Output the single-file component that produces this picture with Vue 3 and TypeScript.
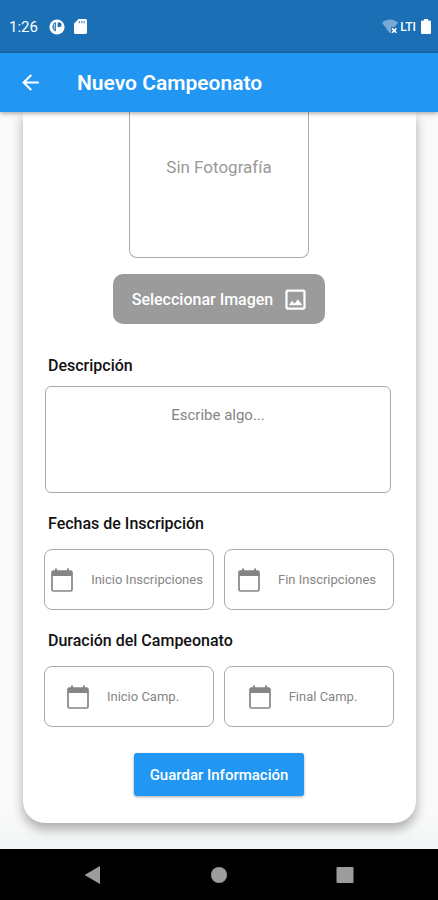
<script setup lang="ts">
import { ref } from 'vue'

interface DateField {
  id: string
  label: string
}

interface DateGroup {
  title: string
  compact: boolean
  fields: DateField[]
}

const description = ref('')

const groups: DateGroup[] = [
  {
    title: 'Fechas de Inscripción',
    compact: false,
    fields: [
      { id: 'signup-start', label: 'Inicio Inscripciones' },
      { id: 'signup-end', label: 'Fin Inscripciones' },
    ],
  },
  {
    title: 'Duración del Campeonato',
    compact: true,
    fields: [
      { id: 'cup-start', label: 'Inicio Camp.' },
      { id: 'cup-end', label: 'Final Camp.' },
    ],
  },
]
</script>

<template>
  <div class="screen">
    <div class="status">
      <span class="clock">1:26</span>
      <svg class="status-app" viewBox="0 0 16 16" aria-hidden="true">
        <circle cx="8" cy="8" r="7.6" fill="#fff" />
        <path d="M6.9 3.2V12.4C4.9 12 3.4 10.2 3.4 7.800S4.9 3.600 6.900 3.200Z" fill="#1b6fb5" />
        <path d="M5.300 5v5.400" stroke="#fff" stroke-width=".8" />
        <path d="M8.600 3.600H10.400A2 2 0 0 1 10.400 8H8.600Z" fill="#1b6fb5" />
      </svg>
      <svg class="status-card" viewBox="0 0 13 15" aria-hidden="true">
        <path d="M4.6 0H11.4Q13 0 13 1.6V13.4Q13 15 11.4 15H1.6Q0 15 0 13.4V4.6Z" fill="#fff" />
        <path d="M5.4 2v2.2M7.8 2v2.2M10.2 2v2.2" stroke="#5c9ad0" stroke-width="1.3" />
      </svg>
      <span class="spacer"></span>
      <svg class="wifi" viewBox="0 0 16 15" aria-hidden="true">
        <path d="M0 3.8C4.6-.6 11.4-.6 16 3.8L12.8 8H9v5.6L8 14.4Z" fill="#76a9d3" />
        <path d="M10 9.4l4.4 4.4M14.4 9.4L10 13.8" stroke="#fff" stroke-width="1.6" />
      </svg>
      <span class="network">LTI</span>
      <svg class="battery" viewBox="0 0 10 15" aria-hidden="true">
        <path d="M3 0H7V1.6H8.8Q10 1.6 10 2.8V13.8Q10 15 8.8 15H1.2Q0 15 0 13.8V2.8Q0 1.6 1.2 1.6H3Z" fill="#fff" />
      </svg>
    </div>

    <header class="appbar">
      <button class="back" type="button" aria-label="Volver">
        <svg viewBox="0 0 24 24" aria-hidden="true">
          <path d="M20 11H7.83l5.59-5.59L12 4l-8 8 8 8 1.41-1.41L7.83 13H20v-2z" fill="#fff" />
        </svg>
      </button>
      <h1>Nuevo Campeonato</h1>
    </header>

    <main class="content">
      <form class="card" @submit.prevent>
        <div class="photo">Sin Fotografía</div>
        <button class="pick" type="button">
          <span>Seleccionar Imagen</span>
          <svg viewBox="0 0 24 24" aria-hidden="true">
            <path
              d="M19 5v14H5V5h14m0-2H5c-1.1 0-2 .9-2 2v14c0 1.1.9 2 2 2h14c1.1 0 2-.9 2-2V5c0-1.1-.9-2-2-2zm-4.860 8.860l-3 3.870L9 13.140 6 17h12l-3.860-5.140z"
              fill="#fff"
            />
          </svg>
        </button>

        <label class="heading" for="description">Descripción</label>
        <textarea id="description" v-model="description" placeholder="Escribe algo..."></textarea>

        <section v-for="group in groups" :key="group.title" class="group">
          <h2 class="heading">{{ group.title }}</h2>
          <div class="dates">
            <button
              v-for="field in group.fields"
              :key="field.id"
              type="button"
              class="date"
              :class="{ compact: group.compact }"
            >
              <svg viewBox="0 0 22 24" aria-hidden="true">
                <rect x="1" y="3" width="20" height="20" rx="1.500" fill="none" stroke="#858585" stroke-width="1.700" />
                <path d="M1 3h20v5H1zM4 .5h2V4H4zM16 .5h2V4h-2z" fill="#858585" />
              </svg>
              <span>{{ field.label }}</span>
            </button>
          </div>
        </section>

        <button class="save" type="submit">Guardar Información</button>
      </form>
    </main>

    <nav class="system">
      <button type="button" aria-label="Atrás">
        <svg viewBox="0 0 20 20" aria-hidden="true"><path d="M1.500 10L17 1V19Z" fill="#9c9c9c" /></svg>
      </button>
      <button type="button" aria-label="Inicio">
        <svg viewBox="0 0 20 20" aria-hidden="true"><circle cx="10" cy="10" r="8" fill="#9c9c9c" /></svg>
      </button>
      <button type="button" aria-label="Recientes">
        <svg viewBox="0 0 20 20" aria-hidden="true"><rect x="1.500" y="2" width="17" height="16" rx="1" fill="#9c9c9c" /></svg>
      </button>
    </nav>
  </div>
</template>

<style>
body {
  margin: 0;
}
</style>

<style scoped>
.screen {
  display: flex;
  flex-direction: column;
  min-height: 100vh;
  background: #fafafa;
  font-family: Roboto, 'Liberation Sans', sans-serif;
  color: #111;
}

button {
  margin: 0;
  padding: 0;
  border: 0;
  background: none;
  font: inherit;
  color: inherit;
  cursor: pointer;
}

svg {
  display: block;
  flex: none;
}

.status {
  display: flex;
  align-items: center;
  box-sizing: border-box;
  height: 53px;
  padding: 0 7px 0 9px;
  background: #1b6fb5;
  color: #fff;
}

.clock {
  margin-right: 11px;
  font-size: 15px;
}

.status-app {
  width: 16px;
  height: 16px;
  margin-right: 9px;
}

.status-card {
  width: 13px;
  height: 15px;
}

.spacer {
  flex: 1;
}

.wifi {
  width: 16px;
  height: 15px;
}

.network {
  margin: 0 5px 0 2px;
  font-size: 12px;
  font-weight: 500;
}

.battery {
  width: 10px;
  height: 15px;
}

.appbar {
  position: relative;
  display: flex;
  align-items: center;
  gap: 34px;
  height: 59px;
  padding: 0 18px;
  background: #2196f3;
  box-shadow: 0 1px 5px rgba(0, 0, 0, 0.4);
  color: #fff;
}

.back svg {
  width: 25px;
  height: 25px;
}

h1 {
  margin: 0;
  font-size: 21px;
  font-weight: 600;
}

.content {
  flex: 1;
  padding: 0 22px 26px 23px;
  background: linear-gradient(#fafafa 95%, #f1f5f6);
}

.card {
  display: flex;
  flex-direction: column;
  align-items: center;
  padding: 0 22px 27px 21px;
  border-radius: 0 0 22px 22px;
  background: #fff;
  box-shadow: 0 6px 12px rgba(0, 0, 0, 0.32);
}

.photo {
  display: flex;
  justify-content: center;
  box-sizing: border-box;
  width: 180px;
  height: 146px;
  padding-top: 43px;
  border: 1px solid #aaa;
  border-top: 0;
  border-radius: 0 0 8px 8px;
  font-size: 17px;
  line-height: 24px;
  color: #999;
}

.pick {
  display: flex;
  align-items: center;
  justify-content: center;
  gap: 9px;
  height: 50px;
  margin: 16px 0 32px;
  padding: 0 16px 0 19px;
  border-radius: 10px;
  background: #9b9b9b;
  font-size: 16px;
  font-weight: 500;
  color: #fff;
}

.pick svg {
  width: 27px;
  height: 27px;
}

.heading {
  align-self: stretch;
  margin: 0;
  padding-left: 4px;
  font-size: 16px;
  font-weight: 500;
  line-height: 20px;
}

textarea {
  box-sizing: border-box;
  align-self: stretch;
  height: 107px;
  margin: 10px 3px 0 1px;
  padding: 18px 12px;
  border: 1px solid #aaa;
  border-radius: 6px;
  background: transparent;
  font: inherit;
  font-size: 15px;
  line-height: 20px;
  text-align: center;
  resize: none;
}

textarea::placeholder {
  color: #858585;
  opacity: 1;
}

.group {
  align-self: stretch;
  padding-top: 21px;
}

.dates {
  display: flex;
  gap: 10px;
  padding-top: 15px;
}

.date {
  display: flex;
  flex: 1;
  align-items: center;
  justify-content: center;
  gap: 18px;
  box-sizing: border-box;
  height: 61px;
  padding-right: 4px;
  border: 1px solid #aaa;
  border-radius: 8px;
  font-size: 13px;
  color: #858585;
  white-space: nowrap;
}

.date.compact {
  padding-right: 12px;
}

.date svg {
  width: 22px;
  height: 24px;
}

.save {
  height: 43px;
  margin-top: 26px;
  padding: 0 16px;
  border-radius: 3px;
  background: #2196f3;
  box-shadow: 0 1px 3px rgba(0, 0, 0, 0.35);
  font-size: 15px;
  font-weight: 500;
  color: #fff;
}

.system {
  position: relative;
  display: flex;
  justify-content: center;
  height: 51px;
  background: #000;
}

.system button {
  display: flex;
  align-items: center;
  justify-content: center;
  width: 126px;
}

.system svg {
  width: 20px;
  height: 20px;
}
</style>
